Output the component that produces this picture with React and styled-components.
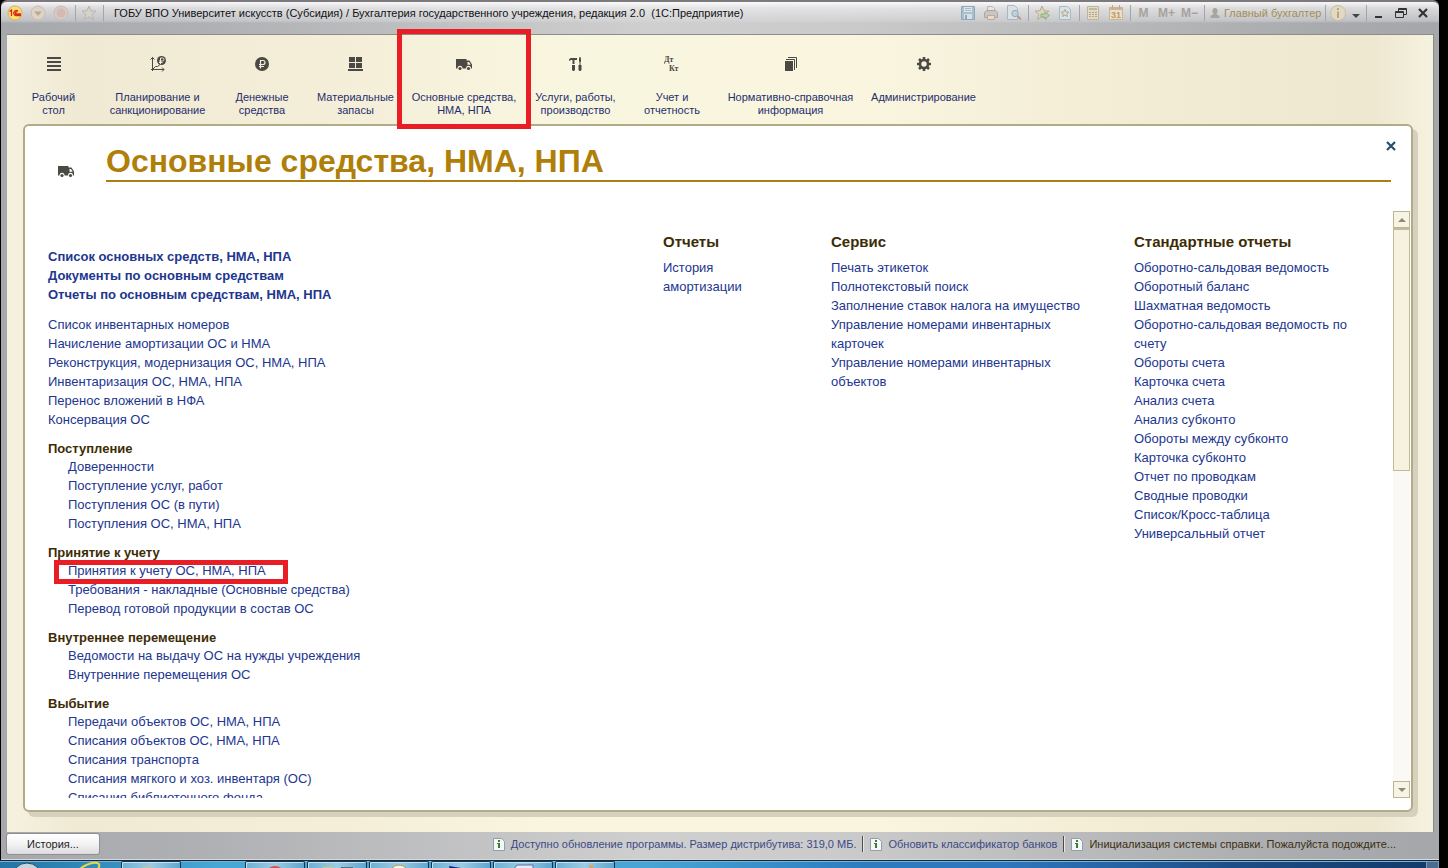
import React, { useRef } from 'react';
import styled, { createGlobalStyle, css } from 'styled-components';

const GlobalStyle = createGlobalStyle`
    *, *::after {
        box-sizing: border-box;
    }
    body {
        margin: 0;
        background: #000;
        font-family: 'Liberation Sans', Arial, sans-serif;
        font-size: 13px;
        color: #22368f;
    }
    button {
        font-family: inherit;
        border: 0;
        padding: 0;
        background: none;
        cursor: pointer;
    }
    svg {
        display: block;
    }
    ul {
        list-style: none;
        margin: 0;
        padding: 0;
    }
`;

/* ---------- icons ---------- */

const DARK = '#4a4943';

const Icon = ({ size = 16, w, h, children }) => (
    <svg width={w || size} height={h || size} viewBox={`0 0 ${w || size} ${h || size}`} aria-hidden='true'>
        {children}
    </svg>
);

const TruckIcon = ({ back = '#f8f4df' }) => (
    <Icon w={17} h={13}>
        <path d='M0 1h10.500v1.500h3L16 6.500v4H0z' fill={DARK} />
        <path d='M11.500 4H13l1.700 2.700h-3.200z' fill={back} />
        <circle cx='4' cy='10.300' r='2.500' fill={back} />
        <circle cx='12.500' cy='10.300' r='2.500' fill={back} />
        <circle cx='4' cy='10.500' r='1.600' fill={DARK} />
        <circle cx='12.500' cy='10.500' r='1.600' fill={DARK} />
    </Icon>
);

const DesktopIcon = () => (
    <Icon size={14}>
        <path d='M0 0h14v2H0zM0 4h14v2H0zM0 8h14v2H0zM0 12h14v2H0z' fill={DARK} />
    </Icon>
);

const PlanIcon = () => (
    <Icon w={16} h={16}>
        <path d='M2.500 1v14M.5 3.500l2-2 2 2M1 13.500h13M12 11.500l2 2-2 2M2.500 13.500l3-3h2l2.500-2' fill='none' stroke={DARK} />
        <circle cx='11.500' cy='4.500' r='4.500' fill={DARK} />
        <path d='M10.500 8V2h2a1.500 1.500 0 0 1 0 3H9M9 6.500h3.500' fill='none' stroke='#f4efd8' />
    </Icon>
);

const RubleIcon = () => (
    <Icon size={14}>
        <circle cx='7' cy='7' r='7' fill={DARK} />
        <path d='M5.500 11.500V3.500H8a2 2 0 0 1 0 4H4M4 9.500h5' fill='none' stroke='#f4efd8' strokeWidth='1.200' />
    </Icon>
);

const StockIcon = () => (
    <Icon w={15} h={14}>
        <path d='M1 0h6v5H1zM8 0h6v5H8zM1 6h6v5H1zM8 6h6v5H8zM0 12h15v2H0z' fill={DARK} />
    </Icon>
);

const ToolsIcon = () => (
    <Icon w={13} h={14}>
        <path d='M0 3c0-1 1-2 2-2h6v2H5.500v4h-2V3H2L0 4zM3 8h3v5l-1 1H4l-1-1zM10.500 0h1l.500 2v2.500l-.500.500v3h-1V5l-.500-.500V2zM9.500 8h3v5l-1 1h-1l-1-1z' fill={DARK} />
    </Icon>
);

const DtKtIcon = () => (
    <Icon w={16} h={18}>
        <text x='0' y='7' fontFamily='Liberation Serif, serif' fontWeight='700' fontSize='8' fill={DARK}>Дт</text>
        <text x='5' y='16' fontFamily='Liberation Serif, serif' fontWeight='700' fontSize='8' fill={DARK}>Кт</text>
    </Icon>
);

const BooksIcon = () => (
    <Icon w={12} h={14}>
        <path d='M0 4h8v10H0z' fill={DARK} />
        <path d='M1 2.500h8.500V13M3 .5h8.500V11' fill='none' stroke={DARK} />
    </Icon>
);

const GearIcon = () => (
    <Icon size={14}>
        <circle cx='7' cy='7' r='4' fill='none' stroke={DARK} strokeWidth='2.600' />
        <path d='M7 0v2.500M7 11.500V14M0 7h2.500M11.500 7H14M2 2l2 2M10 10l2 2M12 2l-2 2M4 10l-2 2' stroke={DARK} strokeWidth='2.600' />
    </Icon>
);

const LogoIcon = () => (
    <Icon size={16}>
        <circle cx='8' cy='8' r='7' fill='#fbe36a' stroke='#e0a96a' />
        <path d='M2.500 6.500L4.500 5v6M11 6.200a2.500 2.500 0 1 0-1.500 4.300h4.500M10 7.300a1 1 0 1 0-.500 1.700h4.500' fill='none' stroke='#d8281c' strokeWidth='1.300' />
    </Icon>
);

const RoundIcon = ({ arrow }) => (
    <Icon size={16}>
        <circle cx='8' cy='8' r='7' fill={arrow ? '#ddd4c6' : '#d9cac5'} stroke='#c9bdb0' />
        {arrow ? <path d='M4 6.500h8L8 11z' fill='#b8a995' /> : <circle cx='8' cy='8' r='4.500' fill='#d5b9b3' />}
    </Icon>
);

const STAR = 'M8 1l2 4.700 5 .4-3.800 3.300L12.400 14.500 8 11.800 3.600 14.500l1.200-5.100L1 6.100l5-.4z';

const StarIcon = ({ fill = '#d6d2cb', stroke = '#bbb5ab', go }) => (
    <Icon size={16}>
        <path d={STAR} fill={fill} stroke={stroke} />
        {go && <path d='M7 9h4V7l4.500 3.500L11 14v-2H7z' fill='#b9cfa6' stroke='#92ad86' />}
    </Icon>
);

const SaveIcon = () => (
    <Icon size={16}>
        <path d='M1.500 1.500h13v13h-13z' fill='#a9bfce' stroke='#8ea8bb' />
        <path d='M4 2h8v5H4z' fill='#e0e5e8' />
        <path d='M5 3.500h6M5 5.500h6' stroke='#a9b9c4' />
        <path d='M4 9h8v5H4z' fill='#d8e0e6' />
        <path d='M5 10h2v4H5z' fill='#8ea8bb' />
    </Icon>
);

const PrintIcon = () => (
    <Icon size={16}>
        <path d='M4.500 1.500h5l2 2v4h-7z' fill='#e8e6e4' stroke='#bab4b0' />
        <path d='M1.500 7.500l2-2h9l2 2v5h-13z' fill='#c9c5c3' stroke='#aaa5a3' />
        <path d='M4.500 10.500h7v4h-7z' fill='#ecd9c8' stroke='#c2a994' />
    </Icon>
);

const PreviewIcon = () => (
    <Icon size={16}>
        <path d='M1.500 .5h7l3 3v11h-10z' fill='#d9e1e6' stroke='#a8b8c3' />
        <circle cx='9' cy='8.500' r='3.200' fill='#bfd0da' stroke='#9aabb6' />
        <path d='M11.500 11l3.500 3.500' stroke='#b99a90' strokeWidth='2' />
    </Icon>
);

const DocStarIcon = () => (
    <Icon size={16}>
        <path d='M2.500 1.500h8l3 3v10h-11z' fill='#dbe2e6' stroke='#a9bac5' />
        <path d='M8 4.500l1.200 2.400 2.600.3-1.900 1.700.5 2.600L8 10.200 5.600 11.500l.5-2.600-1.900-1.700 2.600-.3z' fill='#e1dcc4' stroke='#a7a99c' />
    </Icon>
);

const CalcIcon = () => (
    <Icon size={16}>
        <path d='M2.500 1.500h11v13h-11z' fill='#e3d9c5' stroke='#c3b496' />
        <path d='M4 3h8v2H4z' fill='#b7bd9f' />
        <path d='M4 7h2v1H4zM7 7h2v1H7zM10 7h2v1h-2zM4 9h2v1H4zM7 9h2v1H7zM10 9h2v1h-2zM4 11h2v1H4zM7 11h2v1H7zM10 11h2v1h-2z' fill='#b3a78c' />
    </Icon>
);

const CalendarIcon = () => (
    <Icon size={16}>
        <path d='M1.500 2.500h13v12h-13z' fill='#e9dfcb' stroke='#c9b591' />
        <path d='M1 2h14v3H1z' fill='#cfb594' />
        <path d='M4.500 0v4M11.500 0v4' stroke='#b9aa92' />
        <text x='3' y='13' fontFamily='Liberation Sans, sans-serif' fontWeight='700' fontSize='9' fill='#c09a68'>31</text>
    </Icon>
);

const UserIcon = () => (
    <Icon w={10} h={10}>
        <path d='M5 0a2.600 2.600 0 0 1 2.600 3c0 1.400-.6 2-1 2.600v.7L9.500 8v2h-9V8l2.900-1.700v-.7c-.4-.6-1-1.200-1-2.600A2.600 2.600 0 0 1 5 0z' fill='#aaa49e' />
    </Icon>
);

const InfoIcon = () => (
    <Icon size={16}>
        <circle cx='8' cy='8' r='7.500' fill='#e2d9c4' stroke='#cbbd9f' />
        <path d='M7 3h2v2H7zM7 6.500h2V13H7z' fill='#bca877' />
    </Icon>
);

const NoteIcon = () => (
    <Icon w={12} h={13}>
        <path d='M.5.500h8l3 3v9H.5z' fill='#f4f8fa' stroke='#8f9fae' />
        <path d='M5 2h2v2H5zM4 5h3v5H5V6H4z' fill='#3a7f25' />
    </Icon>
);

const CloseIcon = ({ color = '#333', size = 10 }) => (
    <Icon size={size}>
        <path d={`M1 1l${size - 2} ${size - 2}M${size - 1} 1L1 ${size - 1}`} stroke={color} strokeWidth='2.200' />
    </Icon>
);

/* ---------- layout ---------- */

const Screen = styled.div`
    height: 100vh;
    display: flex;
    flex-direction: column;
    padding-right: 9px;
    overflow: hidden;
`;

const Window = styled.div`
    flex: 1;
    min-height: 0;
    display: flex;
    flex-direction: column;
    margin-left: 1px;
    border-top: 2px solid #7d797e;
    border-radius: 6px 6px 0 0;
    background: linear-gradient(90deg, #a7a8ac, #b0b1b4 15%, #cfcfcf 45%, #cbcbcb 58%, #a9aaad 92%, #a6a7aa);
`;

const TitleBar = styled.header`
    flex: none;
    height: 32px;
    padding: 1px 5px 11px 2px;
    display: flex;
    align-items: center;
    background: linear-gradient(180deg, rgba(255, 255, 255, 0.9), rgba(235, 235, 237, 0.75) 6px, rgba(215, 216, 220, 0.5) 19px, transparent 21px);
    border-radius: 6px 6px 0 0;
`;

const ToolButton = styled.button`
    width: ${({ $width }) => $width || 23}px;
    height: 20px;
    display: flex;
    align-items: center;
    justify-content: center;
    font-size: 12px;
    font-weight: 700;
    color: #a8a19d;
`;

const Separator = styled.span`
    width: 1px;
    height: 16px;
    margin: 0 1px 0 3px;
    background: #a5a5a8;
`;

const WindowTitle = styled.h1`
    flex: 1;
    margin: 0 0 0 9px;
    font-size: 11px;
    font-weight: 400;
    line-height: 18px;
    white-space: nowrap;
    color: #111;
`;

const UserName = styled.button`
    width: 116px;
    display: flex;
    align-items: center;
    gap: 4px;
    padding-left: 4px;
    font-size: 11px;
    white-space: nowrap;
    color: #a48e52;
`;

const Workspace = styled.main`
    flex: 1;
    min-height: 0;
    display: flex;
    flex-direction: column;
    margin: 0 5px 0 6px;
    border-top: 1px solid #8d8c86;
    border-right: 1px solid #8d8c86;
    background: linear-gradient(90deg, #f5f2df, #f0e9d3 5%, #f5efd9 25%, #f9f6e0 40%, #f9f5df 60%, #f3ecd5 80%, #efe8d1 96%, #f5f2df);
`;

const Sections = styled.nav`
    flex: none;
    display: flex;
    height: 89px;
`;

const Highlight = css`
    content: '';
    position: absolute;
    border: 5px solid #e81d25;
    pointer-events: none;
`;

const SectionButton = styled.button`
    flex: none;
    position: relative;
    width: ${({ $width }) => $width}px;
    display: flex;
    flex-direction: column;
    align-items: center;
    padding-top: 19px;
    font-size: 11px;
    line-height: 13px;
    white-space: nowrap;
    color: #1f2f6e;

    ${({ $marked }) => $marked && css`
        &::after {
            ${Highlight}
            inset: -6px -5px -5px;
        }
    `}
`;

const SectionIcon = styled.span`
    height: 20px;
    margin-bottom: 17px;
    display: flex;
    align-items: center;
`;

const Panel = styled.section`
    flex: 1;
    min-height: 0;
    display: flex;
    flex-direction: column;
    margin: 0 20px 20px 16px;
    border: 2px solid #b3aa86;
    border-radius: 6px;
    background: #fff;
    box-shadow: 5px 5px 0 #d6d1bf;
`;

const PanelHeader = styled.div`
    flex: none;
    display: flex;
    align-items: flex-start;
    height: 85px;
    padding: 16px 20px 0 33px;
    position: relative;
`;

const PanelIcon = styled.span`
    width: 48px;
    padding-top: 23px;
`;

const PanelTitle = styled.h2`
    flex: 1;
    margin: 0;
    border-bottom: 2px solid #ab7f10;
    font-size: 32px;
    line-height: 38px;
    color: #b07f0a;
`;

const PanelClose = styled.button`
    position: absolute;
    top: 12px;
    right: 12px;
    width: 16px;
    height: 16px;
    display: grid;
    place-items: center;
`;

const PanelBody = styled.div`
    flex: 1;
    min-height: 0;
    display: flex;
    padding-bottom: 12px;
`;

const Viewport = styled.div`
    flex: 1;
    overflow-y: auto;
    scrollbar-width: none;
    display: grid;
    grid-template-columns: 567fr 120fr 255fr 235fr;
    column-gap: 48px;
    padding: 0 24px 0 23px;
`;

const MainColumn = styled.div`
    display: flex;
    flex-direction: column;
    gap: 11px;
    padding-top: 36px;
`;

const SideColumn = styled.div`
    padding-top: 21px;
`;

const SideTitle = styled.h3`
    margin: 0 0 6px;
    font-size: 15px;
    line-height: 20px;
    color: #3d2c05;
`;

const GroupTitle = styled.h3`
    margin: 0;
    font-size: 13px;
    line-height: 17px;
    color: #3d2c05;
`;

const Links = styled.ul`
    padding-left: ${({ $nested }) => ($nested ? 20 : 0)}px;
    font-weight: ${({ $bold }) => ($bold ? 700 : 400)};
    line-height: 19px;
`;

const LinkItem = styled.li`
    position: relative;

    ${({ $marked }) => $marked && css`
        &::after {
            ${Highlight}
            top: -1px;
            left: -14px;
            width: 234px;
            height: 24px;
        }
    `}
`;

const Link = styled.a`
    color: #22368f;
    text-decoration: none;

    &:hover {
        text-decoration: underline;
    }
`;

const ScrollBar = styled.div`
    flex: none;
    width: 17px;
    margin-right: 1px;
    display: flex;
    flex-direction: column;
    background: #faf9f5;
`;

const ScrollButton = styled.button`
    height: 17px;
    display: grid;
    place-items: center;
    border: 1px solid #b9b698;
    background: #f7f4e3;
`;

const ScrollTrack = styled.div`
    flex: 1;
`;

const ScrollThumb = styled.div`
    height: 44%;
    border: 1px solid #bfbb9b;
    border-top-width: 2px;
    background: #f6f2df;
`;

const StatusBar = styled.footer`
    flex: none;
    height: 28px;
    display: flex;
    align-items: flex-start;
    justify-content: space-between;
    padding: 1px 37px 0 5px;
    border-bottom: 1px solid #d9d9da;
`;

const HistoryButton = styled.button`
    width: 94px;
    height: 22px;
    border: 1px solid #8f8f92;
    border-radius: 3px;
    background: linear-gradient(#fff, #f3f3f4 50%, #dcdcdf);
    font-size: 11px;
    color: #222;
`;

const Notices = styled.div`
    display: flex;
    align-items: center;
    height: 22px;
`;

const Notice = styled.a`
    display: flex;
    align-items: center;
    gap: 6px;
    padding: 0 6px 0 7px;
    font-size: 11px;
    line-height: 16px;
    white-space: nowrap;
    text-decoration: none;
    color: ${({ $muted }) => ($muted ? '#3b2f12' : '#3c4a86')};

    & + & {
        border-left: 1px solid #4b4b4d;
        box-shadow: inset 1px 0 0 #e8e8e8;
    }
`;

const TaskBar = styled.div`
    flex: none;
    height: 8px;
    display: flex;
    border-top: 1px solid #10283c;
    box-shadow: inset 0 1px 0 #78b4d6;
    background: linear-gradient(90deg, #2275a6, #47a7d6 15%, #48a5d5 45%, #2c7cc0 60%, #2e76bd 70%, #1d4d87 86%, #123a68);
    overflow: hidden;
`;

const TaskArea = styled.div`
    width: ${({ $width }) => $width}px;
    padding-left: 11px;
    display: flex;
    gap: 34px;
`;

const TaskButton = styled.button`
    width: 60px;
    margin-right: 2px;
    display: flex;
    justify-content: center;
    align-items: flex-start;
    border: 1px solid #12344e;
    border-bottom: 0;
    border-radius: 2px 2px 0 0;
    box-shadow: inset 1px 1px 0 #c4e2f0;
    background: linear-gradient(90deg, #6cb0d4, #9ccce2 50%, #5fa6cf);
`;

const ShowDesktop = styled.button`
    width: 13px;
    margin-left: auto;
    border: 1px solid #7f9db8;
    border-bottom: 0;
    background: #4a6c90;
`;

/* ---------- data ---------- */

const sections = [
    { label: ['Рабочий', 'стол'], icon: DesktopIcon, width: 93 },
    { label: ['Планирование и', 'санкционирование'], icon: PlanIcon, width: 115 },
    { label: ['Денежные', 'средства'], icon: RubleIcon, width: 94 },
    { label: ['Материальные', 'запасы'], icon: StockIcon, width: 93 },
    { label: ['Основные средства,', 'НМА, НПА'], icon: TruckIcon, width: 124, marked: true },
    { label: ['Услуги, работы,', 'производство'], icon: ToolsIcon, width: 99 },
    { label: ['Учет и', 'отчетность'], icon: DtKtIcon, width: 94 },
    { label: ['Нормативно-справочная', 'информация'], icon: BooksIcon, width: 143 },
    { label: ['Администрирование'], icon: GearIcon, width: 123 },
];

const mainLinks = [
    'Список основных средств, НМА, НПА',
    'Документы по основным средствам',
    'Отчеты по основным средствам, НМА, НПА',
];

const commonLinks = [
    'Список инвентарных номеров',
    'Начисление амортизации ОС и НМА',
    'Реконструкция, модернизация ОС, НМА, НПА',
    'Инвентаризация ОС, НМА, НПА',
    'Перенос вложений в НФА',
    'Консервация ОС',
];

const groups = [
    {
        title: 'Поступление',
        links: ['Доверенности', 'Поступление услуг, работ', 'Поступления ОС (в пути)', 'Поступления ОС, НМА, НПА'],
    },
    {
        title: 'Принятие к учету',
        links: [
            'Принятия к учету ОС, НМА, НПА',
            'Требования - накладные (Основные средства)',
            'Перевод готовой продукции в состав ОС',
        ],
    },
    {
        title: 'Внутреннее перемещение',
        links: ['Ведомости на выдачу ОС на нужды учреждения', 'Внутренние перемещения ОС'],
    },
    {
        title: 'Выбытие',
        links: [
            'Передачи объектов ОС, НМА, НПА',
            'Списания объектов ОС, НМА, НПА',
            'Списания транспорта',
            'Списания мягкого и хоз. инвентаря (ОС)',
            'Списания библиотечного фонда',
        ],
    },
];

const sideGroups = [
    { title: 'Отчеты', links: ['История амортизации'] },
    {
        title: 'Сервис',
        links: [
            'Печать этикеток',
            'Полнотекстовый поиск',
            'Заполнение ставок налога на имущество',
            'Управление номерами инвентарных карточек',
            'Управление номерами инвентарных объектов',
        ],
    },
    {
        title: 'Стандартные отчеты',
        links: [
            'Оборотно-сальдовая ведомость',
            'Оборотный баланс',
            'Шахматная ведомость',
            'Оборотно-сальдовая ведомость по счету',
            'Обороты счета',
            'Карточка счета',
            'Анализ счета',
            'Анализ субконто',
            'Обороты между субконто',
            'Карточка субконто',
            'Отчет по проводкам',
            'Сводные проводки',
            'Список/Кросс-таблица',
            'Универсальный отчет',
        ],
    },
];

const markedLink = 'Принятия к учету ОС, НМА, НПА';

/* ---------- components ---------- */

const LinkList = ({ items, ...props }) => (
    <Links {...props}>
        {items.map((item) => (
            <LinkItem key={item} $marked={item === markedLink}>
                <Link href='#'>{item}</Link>
            </LinkItem>
        ))}
    </Links>
);

const Header = () => (
    <TitleBar>
        <ToolButton aria-label='Главное меню'><LogoIcon /></ToolButton>
        <ToolButton aria-label='Назад'><RoundIcon arrow /></ToolButton>
        <ToolButton aria-label='Вперед'><RoundIcon /></ToolButton>
        <Separator />
        <ToolButton aria-label='Избранное'><StarIcon /></ToolButton>
        <Separator />
        <WindowTitle>
            ГОБУ ВПО Университет искусств (Субсидия) / Бухгалтерия государственного учреждения, редакция 2.0&nbsp; (1С:Предприятие)
        </WindowTitle>
        <ToolButton aria-label='Сохранить'><SaveIcon /></ToolButton>
        <ToolButton aria-label='Печать'><PrintIcon /></ToolButton>
        <ToolButton aria-label='Просмотр'><PreviewIcon /></ToolButton>
        <Separator />
        <ToolButton aria-label='Добавить в избранное'><StarIcon fill='#ddd6bd' stroke='#b5ad94' go /></ToolButton>
        <ToolButton aria-label='Ссылка'><DocStarIcon /></ToolButton>
        <Separator />
        <ToolButton aria-label='Калькулятор'><CalcIcon /></ToolButton>
        <ToolButton aria-label='Календарь'><CalendarIcon /></ToolButton>
        <Separator />
        <ToolButton>M</ToolButton>
        <ToolButton>M+</ToolButton>
        <ToolButton>M−</ToolButton>
        <Separator />
        <UserName><UserIcon />Главный бухгалтер</UserName>
        <Separator />
        <ToolButton aria-label='Справка' $width={22}><InfoIcon /></ToolButton>
        <ToolButton aria-label='Еще' $width={14}>
            <Icon w={8} h={10}><path d='M0 6h8L4 10z' fill='#444' /></Icon>
        </ToolButton>
        <Separator />
        <ToolButton aria-label='Свернуть' $width={22}>
            <Icon w={8} h={10}><path d='M0 8h7v2H0z' fill='#333' /></Icon>
        </ToolButton>
        <ToolButton aria-label='Восстановить' $width={22}>
            <Icon w={12} h={10}>
                <path d='M3.500 3V.500h8v6H9M3 1.500h9' fill='none' stroke='#333' />
                <path d='M.5 3.500h8v6h-8zM0 4.500h9' fill='none' stroke='#333' />
            </Icon>
        </ToolButton>
        <ToolButton aria-label='Закрыть' $width={22}><CloseIcon /></ToolButton>
    </TitleBar>
);

const Taskbar = () => (
    <TaskBar>
        <TaskArea $width={121}>
            <Icon w={32} h={8}><circle cx='16' cy='17' r='15' fill='#c6d5de' stroke='#1d4d6c' /></Icon>
            <Icon w={30} h={8}><path d='M3 8C9 3 18 0 22 3c1 2 0 3-1 5' fill='none' stroke='#e3d84a' strokeWidth='2' /></Icon>
        </TaskArea>
        <TaskButton aria-label='Проводник'><Icon w={20} h={8}><path d='M2 8V5h9l1 3z' fill='#c6c97c' /></Icon></TaskButton>
        <TaskArea $width={62} />
        <TaskButton aria-label='Chrome'><Icon w={20} h={8}><circle cx='10' cy='14' r='10' fill='#d4534a' /></Icon></TaskButton>
        <TaskButton aria-label='Папка'><Icon w={34} h={8}><path d='M3 8V5h10v3z' fill='#d3cb72' /><path d='M21 8V5h12v3z' fill='#55707e' /></Icon></TaskButton>
        <TaskButton aria-label='1С'><Icon w={20} h={8}><circle cx='10' cy='13' r='10' fill='#f7f4d9' stroke='#a79f66' /></Icon></TaskButton>
        <TaskButton aria-label='Редактор'><Icon w={26} h={8}><path d='M1 4l12 2 10 2H2z' fill='#16208c' /></Icon></TaskButton>
        <TaskButton aria-label='Документ'><Icon w={26} h={8}><path d='M3 8l4-5h16v5' fill='#e6edf7' stroke='#5a6fa8' /></Icon></TaskButton>
        <TaskButton aria-label='Рисунок'><Icon w={26} h={8}><path d='M16 3l5 1 2 4h-4z' fill='#d9a662' /></Icon></TaskButton>
        <ShowDesktop aria-label='Свернуть все окна' />
    </TaskBar>
);

const App = () => {
    const viewport = useRef(null);

    const scroll = (step) => viewport.current.scrollBy({ top: step });

    return (
        <Screen>
            <GlobalStyle />
            <Window>
                <Header />
                <Workspace>
                    <Sections>
                        {sections.map(({ label, icon: SectionGlyph, width, marked }) => (
                            <SectionButton key={label[0]} $width={width} $marked={marked}>
                                <SectionIcon><SectionGlyph /></SectionIcon>
                                {label.map((line) => <span key={line}>{line}</span>)}
                            </SectionButton>
                        ))}
                    </Sections>
                    <Panel>
                        <PanelHeader>
                            <PanelIcon><TruckIcon back='#fff' /></PanelIcon>
                            <PanelTitle>Основные средства, НМА, НПА</PanelTitle>
                            <PanelClose aria-label='Закрыть раздел'><CloseIcon color='#24506e' /></PanelClose>
                        </PanelHeader>
                        <PanelBody>
                            <Viewport ref={viewport}>
                                <MainColumn>
                                    <LinkList items={mainLinks} $bold />
                                    <LinkList items={commonLinks} />
                                    {groups.map(({ title, links }) => (
                                        <div key={title}>
                                            <GroupTitle>{title}</GroupTitle>
                                            <LinkList items={links} $nested />
                                        </div>
                                    ))}
                                </MainColumn>
                                {sideGroups.map(({ title, links }) => (
                                    <SideColumn key={title}>
                                        <SideTitle>{title}</SideTitle>
                                        <LinkList items={links} />
                                    </SideColumn>
                                ))}
                            </Viewport>
                            <ScrollBar>
                                <ScrollButton aria-label='Вверх' onClick={() => scroll(-19)}>
                                    <Icon w={8} h={4}><path d='M0 4h8L4 0z' fill='#8d8b78' /></Icon>
                                </ScrollButton>
                                <ScrollTrack><ScrollThumb /></ScrollTrack>
                                <ScrollButton aria-label='Вниз' onClick={() => scroll(19)}>
                                    <Icon w={8} h={4}><path d='M0 0h8L4 4z' fill='#8d8b78' /></Icon>
                                </ScrollButton>
                            </ScrollBar>
                        </PanelBody>
                    </Panel>
                </Workspace>
                <StatusBar>
                    <HistoryButton>История...</HistoryButton>
                    <Notices>
                        <Notice href='#'><NoteIcon />Доступно обновление программы. Размер дистрибутива: 319,0 МБ.</Notice>
                        <Notice href='#'><NoteIcon />Обновить классификатор банков</Notice>
                        <Notice href='#' $muted><NoteIcon />Инициализация системы справки. Пожалуйста подождите...</Notice>
                    </Notices>
                </StatusBar>
            </Window>
            <Taskbar />
        </Screen>
    );
};

export default App;
